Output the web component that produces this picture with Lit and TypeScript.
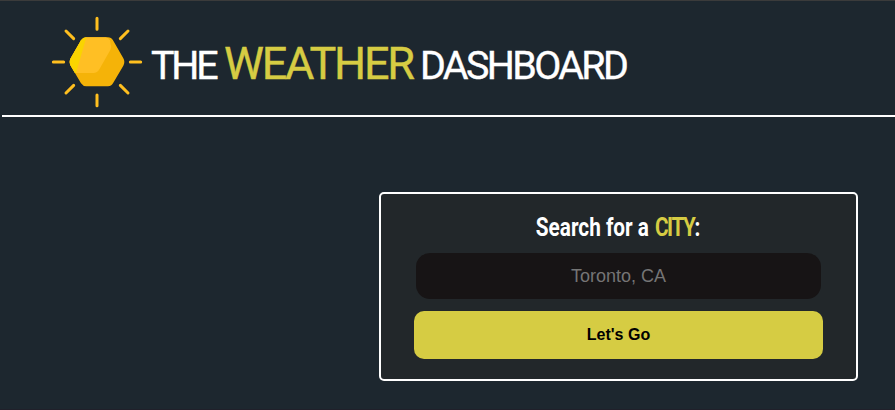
import { LitElement, html, css } from "lit";
import { customElement } from "lit/decorators.js";

@customElement("sun-logo")
class SunLogo extends LitElement {
  static styles = css`
    :host { display: block; width: 115px; height: 115px; flex: none; }
    svg { display: block; width: 100%; height: 100%; }
    .rays { stroke: #ffbf1f; stroke-width: 9; stroke-linecap: round; }
  `;
  render() {
    return html`<svg viewBox="0 0 345 345" aria-hidden="true">
      <path class="rays" d="M171 40V73M171 270V302M40 171H71M271 171H302M78 78L101 101M241 101L264 78M78 264L101 241M241 241L264 264" />
      <path fill="#f5b308" d="M139 97H204Q214 97 219 106L250 160Q256 171 250 182L219 235Q214 244 204 244H139Q129 244 123 235L92 182Q86 171 92 160L123 106Q129 97 139 97Z" />
      <path fill="#ffbf24" d="M139 97H197Q206 98 210 106L212 118Q216 126 211 135L179 191Q172 204 160 204H105L92 182Q86 171 92 160L123 106Q129 97 139 97Z" />
      <path fill="#fad400" d="M139 97Q129 97 123 106L92 160Q86 171 92 182L105 204H108Z" />
    </svg>`;
  }
}

@customElement("app-root")
class AppRoot extends LitElement {
  static styles = css`
    :host {
      display: flex;
      flex-direction: column;
      box-sizing: border-box;
      height: 410px;
      background: #1d272f;
      border-top: 1px solid #3b3b3b;
      border-bottom: 1px solid #20202a;
      color: #fff;
      overflow: hidden;
    }
    header {
      box-sizing: border-box;
      height: 116px;
      margin-left: 2px;
      padding: 4px 0 0 38px;
      display: flex;
      border-bottom: 2px solid #fff;
    }
    h1 {
      margin: 31px 0 0 -4px;
      display: flex;
      align-items: baseline;
      font: 400 39.4px/56px Roboto, sans-serif;
      white-space: nowrap;
      -webkit-text-stroke: 0.4px currentColor;
    }
    .the { width: 73px; letter-spacing: -3.2px; }
    .weather { width: 196px; font-size: 45px; letter-spacing: -2.2px; color: #d6cc43; }
    .dash { letter-spacing: -2.6px; }
    .panel {
      box-sizing: border-box;
      width: 479px;
      height: 189px;
      margin: 75px 37px 0 auto;
      border: 2px solid #fff;
      border-radius: 5px;
      background: #22272a;
      display: flex;
      flex-direction: column;
      align-items: center;
    }
    h2 {
      margin: 19px 0 10px;
      font: 700 25px/30px Roboto, sans-serif;
      white-space: nowrap;
      transform: scaleX(.83);
    }
    .city { color: #d6cc43; letter-spacing: -1.7px; margin-left: 1px; }
    input, button {
      box-sizing: border-box;
      border: 0;
      margin: 0;
      text-align: center;
      font-family: "Liberation Sans", Arial, sans-serif;
    }
    input {
      width: 405px;
      height: 46px;
      border-radius: 14px;
      background: #171415;
      font-size: 18px;
      color: #fff;
      outline: 0;
    }
    input::placeholder { color: #757575; }
    button {
      width: 409px;
      height: 48px;
      margin-top: 12px;
      border-radius: 10px;
      background: #d6cc43;
      color: #000;
      font-size: 16px;
      font-weight: 700;
    }
  `;
  render() {
    return html`
      <header>
        <sun-logo></sun-logo>
        <h1><span class="the">THE</span><span class="weather">WEATHER</span><span class="dash">DASHBOARD</span></h1>
      </header>
      <section class="panel">
        <h2>Search for a <span class="city">CITY</span>:</h2>
        <input type="text" placeholder="Toronto, CA" />
        <button type="button">Let's Go</button>
      </section>
    `;
  }
}
